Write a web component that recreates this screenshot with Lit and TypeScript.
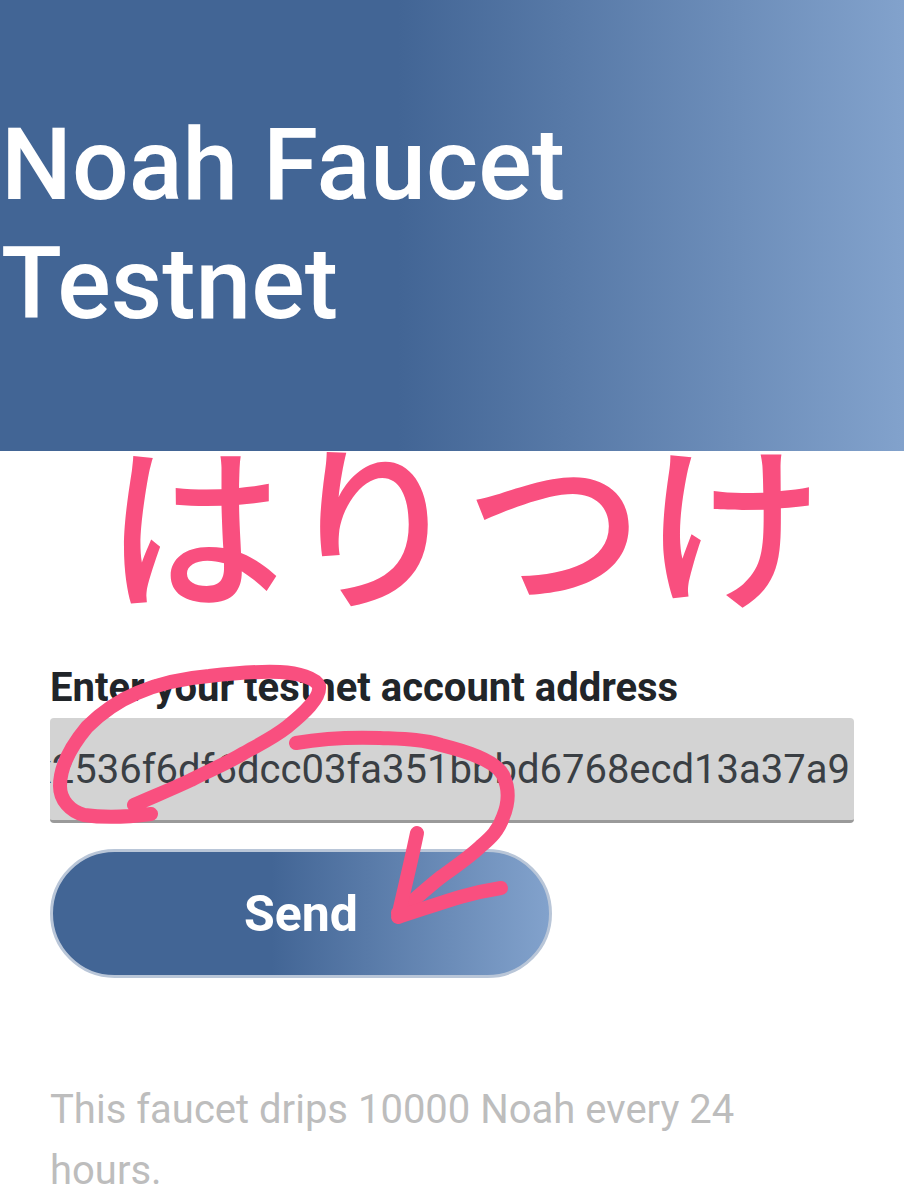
import { LitElement, html, css, svg } from "lit";
import { customElement } from "lit/decorators.js";

@customElement("app-root")
export class AppRoot extends LitElement {
  static styles = css`
    :host {
      display: block;
      position: relative;
      width: 904px;
      height: 1200px;
      overflow: hidden;
      background: #fff;
      font-family: Roboto, "Liberation Sans", sans-serif;
    }
    .hero {
      height: 451px;
      box-sizing: border-box;
      padding: 105px 0 0 1px;
      background: linear-gradient(90deg, #426595 0%, #426595 44%, #82a2cc 100%);
    }
    h1 {
      margin: 0;
      width: 700px;
      color: #fff;
      font-size: 100px;
      font-weight: 500;
      line-height: 119px;
    }
    .form {
      display: flex;
      flex-direction: column;
      align-items: flex-start;
      padding: 215px 50px 0 50px;
    }
    label {
      color: #212529;
      font-size: 40px;
      font-weight: 700;
      line-height: 44px;
    }
    .input {
      box-sizing: border-box;
      width: 804px;
      height: 105px;
      margin-top: 8px;
      padding-right: 4px;
      display: flex;
      justify-content: flex-end;
      align-items: center;
      overflow: hidden;
      white-space: nowrap;
      background: #d3d3d3;
      border-bottom: 3px solid #9a9a9a;
      border-radius: 4px;
      color: #3a3f44;
      font-size: 40px;
    }
    button {
      width: 502px;
      height: 129px;
      margin-top: 26px;
      border: 3px solid #b9c6d8;
      border-radius: 65px;
      background: linear-gradient(90deg, #426595 0%, #426595 44%, #82a2cc 100%);
      color: #fff;
      font-family: inherit;
      font-size: 50px;
      font-weight: 700;
    }
    .hint {
      margin: 101px 0 0;
      width: 760px;
      color: #bdbdbd;
      font-size: 40px;
      line-height: 61px;
    }
    .memo {
      position: absolute;
      left: 105px;
      top: 403px;
      color: #f94f7f;
      font-family: "Noto Sans CJK JP", sans-serif;
      font-size: 179px;
      font-weight: 500;
      line-height: 230px;
      white-space: nowrap;
    }
    svg {
      position: absolute;
      inset: 0;
      pointer-events: none;
    }
    path {
      fill: none;
      stroke: #f94f7f;
      stroke-width: 14;
      stroke-linecap: round;
      stroke-linejoin: round;
    }
  `;

  render() {
    return html`
      <header class="hero"><h1>Noah Faucet Testnet</h1></header>
      <main class="form">
        <label>Enter your testnet account address</label>
        <div class="input">0x2536f6df6dcc03fa351bbbd6768ecd13a37a9</div>
        <button>Send</button>
        <p class="hint">This faucet drips 10000 Noah every 24 hours.</p>
      </main>
      <span class="memo">はりつけ</span>
      <svg width="904" height="1200" viewBox="0 0 904 1200">
        ${svg`
          <path d="M151 814 C128 817 104 818 84 815 C70 811 60 800 60 786 C60 766 72 745 87 727 C102 712 118 701 137 693 C160 683 185 678 209 676 C235 673 258 671 280 672 C298 673 316 678 319 686 C321 698 303 714 287 727 C273 738 258 745 244 753 C226 764 208 771 191 780 C172 789 152 797 134 805" />
          <path d="M296 743 C325 738 352 737 380 738 C402 739 422 739 441 745 C465 751 495 760 503 775 C510 790 509 803 503 817 C498 832 489 839 480 847 C468 858 455 867 441 877 C427 888 412 902 398 913" />
          <path d="M417 833 C411 862 404 890 398 917 C420 910 440 903 460 897 C474 893 488 890 501 888" />
        `}
      </svg>
    `;
  }
}
